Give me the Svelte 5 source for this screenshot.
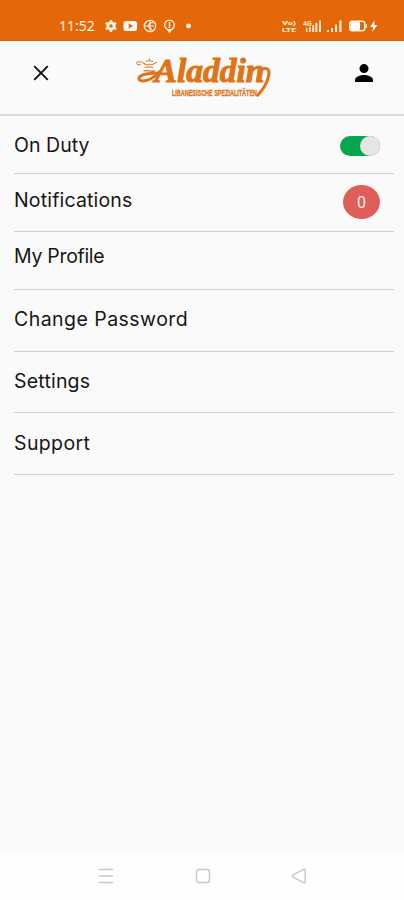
<script>
  const rows = [
    { label: 'On Duty', height: 58, center: 28.5, spacing: 0.05, kind: 'toggle' },
    { label: 'Notifications', height: 58, center: 26, spacing: 0.17, kind: 'badge' },
    { label: 'My Profile', height: 58, center: 24, spacing: -0.3 },
    { label: 'Change Password', height: 62, center: 28.5, spacing: 0.46 },
    { label: 'Settings', height: 61, center: 28.5, spacing: 0.2 },
    { label: 'Support', height: 62, center: 29.5, spacing: 0.37 }
  ];
</script>

<div class="screen">
  <div class="status">
    <span class="time">11:52</span>
    <svg class="left-icons" width="90" height="16" viewBox="0 0 90 16">
      <g fill="none" stroke="#fff3e4">
        <circle cx="6" cy="8" r="3.2" stroke-width="2.8" />
        <path d="M6 2v2.2M6 11.8V14M.8 5l2 1.1M9.2 9.9l2 1.1M.8 11l2-1.1M9.2 6.1l2-1.1" stroke-width="2.3" />
        <circle cx="45" cy="8" r="5.7" stroke-width="1.3" />
        <path d="M45 2v12M48 5c-5-2-6 6-1 6M39.5 8h4M45 8h4" stroke-width="1.1" />
        <circle cx="64.5" cy="7" r="4.8" stroke-width="1.4" />
        <path d="M64.5 4v6M62.8 11.5l1.7 2.5 1.7-2.5" stroke-width="1.5" />
      </g>
      <rect x="18.5" y="3" width="13.5" height="10" rx="2.5" fill="#fff9f2" />
      <path d="M23.7 5.4v5.2l4.6-2.6z" fill="#e46807" />
      <circle cx="83.5" cy="8" r="2.4" fill="#fff9f2" />
    </svg>
    <div class="right-icons">
      <svg class="volte" width="15" height="16" viewBox="0 0 15 16">
        <text x="0" y="7" textLength="14" lengthAdjust="spacingAndGlyphs">Vo)</text>
        <text x="0" y="14" textLength="14" lengthAdjust="spacingAndGlyphs">LTE</text>
      </svg>
      <svg width="77" height="16" viewBox="0 0 77 16">
        <text x="0" y="7.5" class="network">4G</text>
        <g fill="#ffe8cf">
          <path d="M3 10h1.5v4H3zM6 9h1.7v5H6zM9.2 7h2v7h-2zM12.4 5h2v9h-2zM16 2.5h2V14h-2z" />
          <path d="M24 12h2v2h-2zM28 10h2v4h-2zM32 6.5h2V14h-2zM36.3 2.5h2.2V14h-2.2z" />
        </g>
        <rect x="46.8" y="3.3" width="15" height="9.5" rx="2.5" fill="none" stroke="#fff3e4" stroke-width="1.4" />
        <rect x="47.5" y="4" width="9.5" height="8" rx="1.5" fill="#fff" />
        <path d="M63.3 6.2v3.6" stroke="#fff3e4" stroke-width="1.4" />
        <path d="M71.5 2.2 67.2 9h3l-1 5L74.4 7h-3.2z" fill="#fff" />
      </svg>
    </div>
  </div>

  <header>
    <svg class="close" width="16" height="16" viewBox="0 0 16 16">
      <path d="M1.2 1.2 14.8 14.8M14.8 1.2 1.2 14.8" stroke="#111" stroke-width="1.9" />
    </svg>
    <svg class="logo" width="140" height="46" viewBox="133 54 140 46">
      <g fill="none" stroke="#df7316" stroke-linecap="round">
        <path d="M145 64c-3-2.3-6.8-3-8.3-1.4-1.2 1.5 1.5 2.4 4 2.2M144 63.8c4 1.8 8.5 1.4 12.5-1.3" stroke-width="1" />
        <path d="M146 61.3c1.5-1 5-1 6.5 0M149.3 59.4v-.8M145 67.5c2.5-.7 5.5-.7 8 0" stroke-width="1" />
        <path d="M144 70.8c4-.8 6.5 1.2 10.5.2" stroke-width="1.3" />
        <path d="M158 73.6c-6-1-18 .4-19 4.2-.6 3 3.5 3.8 7.5 2.6 5-1.4 9-4.5 13-8.7" stroke-width="3" />
        <path d="M262 69.5c4.8-2.7 7.8.1 6.8 5.5-1.2 7-4.8 13.7-11.1 20.2" stroke-width="3" />
      </g>
      <text x="154.5" y="82" textLength="110" lengthAdjust="spacingAndGlyphs" class="brand">Aladdin</text>
      <text x="172" y="96" textLength="85" lengthAdjust="spacingAndGlyphs" class="tagline">LIBANESISCHE SPEZIALITÄTEN</text>
    </svg>
    <svg class="person" width="20" height="20" viewBox="0 0 20 20">
      <circle cx="10" cy="5.6" r="4.5" />
      <path d="M1 19v-2.3c0-3.1 5.5-4.8 9-4.8s9 1.7 9 4.8V19z" />
    </svg>
  </header>

  <main>
    {#each rows as row}
      <div class="row" style="height:{row.height}px">
        <span class="label" style="height:{row.center * 2}px;letter-spacing:{row.spacing}px">{row.label}</span>
        {#if row.kind === 'toggle'}
          <span class="toggle"><span></span></span>
        {:else if row.kind === 'badge'}
          <span class="badge">0</span>
        {/if}
      </div>
    {/each}
  </main>

  <nav>
    <svg width="16" height="16" viewBox="0 0 16 16"><path d="M1 1.5h14M1 8h14M1 14.5h14" /></svg>
    <svg width="16" height="16" viewBox="0 0 16 16"><rect x="1.5" y="1.5" width="13" height="13" rx="2.5" /></svg>
    <svg width="16" height="16" viewBox="0 0 16 16"><path d="M1.8 7.2 12.5 1.3q1.8-.6 1.8 1.2v11q0 1.8-1.8 1.2L1.8 8.8q-1.2-.8 0-1.6z" /></svg>
  </nav>
</div>

<style>
  .screen {
    width: 404px;
    height: 900px;
    display: flex;
    flex-direction: column;
    background: #fafafa;
    font-family: Inter, 'Liberation Sans', sans-serif;
    overflow: hidden;
  }
  .status {
    box-sizing: border-box;
    height: 41px;
    flex: none;
    background: #e46807;
    border-bottom: 1px solid #d86005;
    display: flex;
    align-items: center;
    padding: 11px 24px 0 59px;
    color: #fff3e4;
  }
  .time { width: 46px; font: 400 14px/16px 'Noto Sans', sans-serif; white-space: nowrap; }
  .right-icons { margin-left: auto; display: flex; align-items: center; gap: 6px; }
  .volte { font: 900 6px Roboto, sans-serif; fill: #ffe8cf; }
  .network { font: 700 7px Roboto, sans-serif; fill: #ffe8cf; }
  header {
    box-sizing: border-box;
    height: 75px;
    flex: none;
    border-bottom: 2px solid #dcdcdc;
    display: flex;
    align-items: flex-start;
    padding: 13px 30px 0 33px;
  }
  .close { margin-top: 11px; }
  .logo { margin-left: 84px; overflow: visible; }
  .brand { font: italic 700 33px 'Liberation Serif', serif; fill: #df7316; stroke: #df7316; stroke-width: 1px; }
  .tagline { font: 700 8.5px 'Liberation Sans', sans-serif; fill: #df7316; stroke: #df7316; stroke-width: 0.3px; }
  .person { margin: 9px 0 0 auto; }
  main { flex: 1; padding: 0 10px 0 14px; }
  .row {
    box-sizing: border-box;
    border-bottom: 1px solid #d0d0d0;
    display: flex;
    align-items: flex-start;
    justify-content: space-between;
  }
  .label { display: flex; align-items: center; font-size: 19.5px; color: #171717; white-space: pre; }
  .toggle { width: 40px; height: 20px; margin: 20px 14px 0 0; border-radius: 10px; background: #0aa64f; display: flex; justify-content: flex-end; }
  .toggle span { width: 20px; height: 20px; border-radius: 50%; background: #e6e4e4; }
  .badge { width: 37px; height: 34px; margin: 11px 14px 0 0; border-radius: 50%; background: #e05e59; color: #ffece4; display: flex; align-items: center; justify-content: center; font: 400 16px Roboto, sans-serif; }
  nav { box-sizing: border-box; height: 49px; flex: none; background: #fefefe; display: flex; justify-content: space-between; padding: 17px 97px 0 98px; }
  nav svg { fill: none; stroke: #c8c8c8; stroke-width: 1.4; }
</style>
